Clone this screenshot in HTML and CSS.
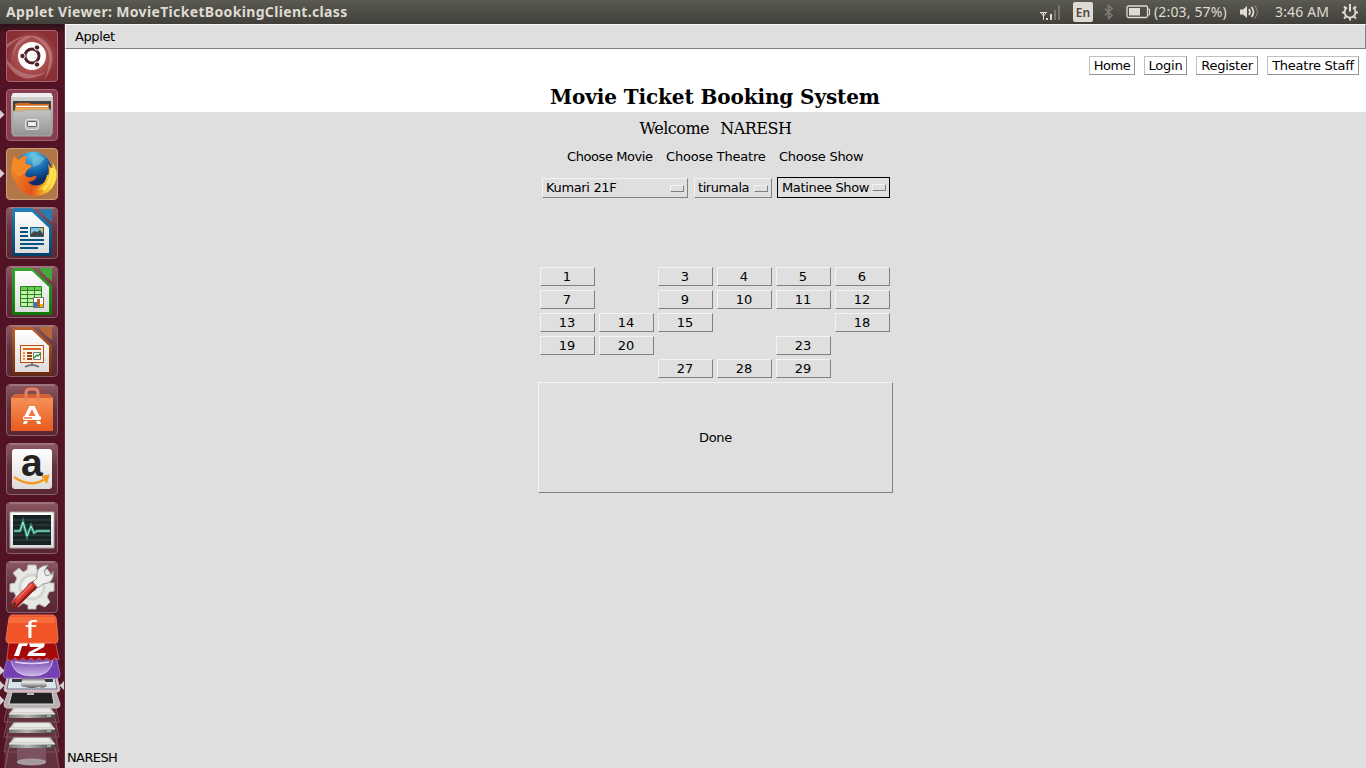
FILE: index.html
```
<!DOCTYPE html>
<html lang="en">
<head>
<meta charset="utf-8">
<title>Applet Viewer: MovieTicketBookingClient.class</title>
<link rel="stylesheet" href="styles.css">
</head>
<body>
<header class="panel">
  <span class="panel-title">Applet Viewer: MovieTicketBookingClient.class</span>
  <div class="tray">
    <svg class="signal" width="22" height="20" viewBox="0 0 22 20"><path d="M0 8.500h7M1 9l2.500 3L6 9M3.500 8v8" stroke="#dfdbd2" fill="none"/><path d="M6 14h2v2H6zM10 10h2v6h-2z" fill="#dfdbd2"/><path d="M14 6h2v10h-2zM18 1h2v15h-2z" fill="#77746b"/></svg>
    <span class="lang">En</span>
    <svg class="bt" width="10" height="16" viewBox="0 0 10 16"><path d="M1 4.500l7 7-3.500 3V1.500l3.500 3-7 7" stroke="#817e76" stroke-width="1.500" fill="none"/></svg>
    <svg class="battery" width="25" height="14" viewBox="0 0 25 14"><rect x="1" y="1" width="20.500" height="11.500" rx="1.500" fill="none" stroke="#dfdbd2" stroke-width="1.300"/><path d="M3 3h11v7.500H3z" fill="#dfdbd2"/><path d="M22 4h1.500v6H22" fill="none" stroke="#dfdbd2"/></svg>
    <span class="charge">(2:03, 57%)</span>
    <svg class="sound" width="21" height="16" viewBox="0 0 21 16"><path d="M1 5.500h3l4-3.500v12l-4-3.500H1z" fill="#dfdbd2"/><path d="M10 5q2 3 0 6M12.500 3q4 5 0 10" stroke="#dfdbd2" stroke-width="1.800" fill="none"/><path d="M15.500 1.500q6 6.500 0 13" stroke="#817e76" stroke-width="1.300" fill="none"/></svg>
    <span class="clock">3:46 AM</span>
    <svg class="gear" width="18" height="18" viewBox="0 0 18 18"><path d="M6 4.500a5.500 5.500 0 1 0 6 0" fill="none" stroke="#dfdbd2" stroke-width="1.900"/><path d="M1 9.500h3M14 9.500h3M9 14.500v3M3 3.500l2 2M15 3.500l-2 2M3 15.500l2-2M15 15.500l-2-2M9 1v7.500" stroke="#dfdbd2" stroke-width="2"/></svg>
  </div>
</header>
<div class="desktop">
<nav class="launcher">
  <svg class="defs" width="0" height="0"><defs>
    <linearGradient id="tile" x2="0" y2="1"><stop stop-color="#8c5963"/><stop offset=".48" stop-color="#63313d"/><stop offset="1" stop-color="#5b2634"/></linearGradient>
    <linearGradient id="paper" x2="0" y2="1"><stop stop-color="#fff"/><stop offset="1" stop-color="#dcdcdc"/></linearGradient>
    <linearGradient id="steel" x2="0" y2="1"><stop stop-color="#d8d8d6"/><stop offset="1" stop-color="#8b8b88"/></linearGradient>
    <linearGradient id="front" x2="0" y2="1"><stop stop-color="#c4c4c2"/><stop offset="1" stop-color="#929290"/></linearGradient>
    <linearGradient id="metal" x2="0" y2="1"><stop stop-color="#666"/><stop offset=".4" stop-color="#eee"/><stop offset="1" stop-color="#555"/></linearGradient>
    <linearGradient id="edge"><stop stop-color="#777975"/><stop offset=".4" stop-color="#b5b7b3"/><stop offset="1" stop-color="#444643"/></linearGradient>
    <linearGradient id="lens" x2="0" y2="1"><stop stop-color="#6d3da9"/><stop offset="1" stop-color="#cbb7e9"/></linearGradient>
    <radialGradient id="dash"><stop stop-color="#c08a89"/><stop offset=".6" stop-color="#a9504f"/><stop offset="1" stop-color="#8a3039"/></radialGradient>
    <radialGradient id="globe" cx=".5" cy=".1" r=".7"><stop stop-color="#64cbe9"/><stop offset=".6" stop-color="#1768ac"/><stop offset="1" stop-color="#0c2d68"/></radialGradient>
    <linearGradient id="fox" x1="0" x2="1" y2=".2"><stop stop-color="#f18a2b"/><stop offset=".6" stop-color="#e0551b"/><stop offset=".85" stop-color="#f3a225"/><stop offset="1" stop-color="#ffe146"/></linearGradient>
    <linearGradient id="bag" x2="0" y2="1"><stop stop-color="#f69860"/><stop offset="1" stop-color="#e95a1d"/></linearGradient>
    <linearGradient id="blue" x2="0" y2="1"><stop stop-color="#2382b7"/><stop offset="1" stop-color="#053f69"/></linearGradient>
    <linearGradient id="green" x2="0" y2="1"><stop stop-color="#39a52d"/><stop offset="1" stop-color="#137608"/></linearGradient>
    <linearGradient id="brown" x2="0" y2="1"><stop stop-color="#ba622f"/><stop offset="1" stop-color="#6b2b08"/></linearGradient>
    <g id="base"><rect x=".5" y=".5" width="51" height="51" rx="3.500" fill="url(#tile)" stroke="#87606a"/><path d="M4 1h44" stroke="#b38e96"/></g>
    <g id="drive"><path d="M8 -4L4 15h55L55 -4" fill="none" stroke="#7f4f5a"/><path d="M14 0h36l5 7H9z" fill="#d2d2d0"/><path d="M16 1h32l3 4H13z" fill="#e8e8e6"/><path d="M9 7h46v3q0 1-1 1H10q-1 0-1-1z" fill="url(#edge)"/><path d="M9 7h46" stroke="#f1f1f1"/><path d="M47 9h4" stroke="#d0ffcf"/></g>
  </defs></svg>

  <svg class="tile" viewBox="0 0 52 52"><rect x=".5" y=".5" width="51" height="51" rx="3.500" fill="url(#dash)" stroke="#a8666b"/><path d="M1 18Q22-3 38 15Q48 26 38 51Q56 24 36 9Q22 0 1 14zM7 38Q4 12 30 6Q3 4 7 38zM1 30Q18 51 40 42Q16 58 1 34z" fill="#d5a3a3" opacity=".45"/><circle cx="26" cy="26" r="14" fill="#fff"/><circle cx="26" cy="26" r="7" fill="none" stroke="#512027" stroke-width="3"/><g fill="#512027" stroke="#fff"><circle cx="16.500" cy="26" r="2.700"/><circle cx="31" cy="17.500" r="2.700"/><circle cx="31" cy="34.500" r="2.700"/></g></svg>

  <svg class="tile" viewBox="0 0 52 52"><rect x=".5" y=".5" width="51" height="51" rx="3.500" fill="#893e4d" stroke="#aa6370"/><path d="M7 4h38l2 5v36H5V9z" fill="url(#steel)"/><path d="M7 4h38l2 4H5z" fill="#eee"/><path d="M7 12h38v11H7z" fill="#444"/><path d="M9 15l3-1h11l2 1h18v8H9z" fill="#d56d20"/><path d="M10 17.500h32" stroke="#fff" stroke-width="1.500"/><path d="M9 19h34v4H9z" fill="#f2aa4b"/><path d="M7 22h11l2-1h25v26H7z" fill="url(#front)" stroke="#aaa"/><rect x="19.500" y="30.500" width="13" height="10" rx="2" fill="#b9b9b7" stroke="#e5e5e5"/><rect x="21.500" y="32.500" width="9" height="5" rx="1" fill="#eee" stroke="#555"/></svg>

  <svg class="tile" viewBox="0 0 52 52"><rect x=".5" y=".5" width="51" height="51" rx="3.500" fill="#b27748" stroke="#cfa078"/><circle cx="27" cy="22" r="18.500" fill="url(#globe)"/><path d="M26 12l5-5 8 3-5 6-7 3z" fill="#8bd2e4" opacity=".5"/><path d="M6 16L8 8l4 4q4-4 9-4-3 4-1 8l6 2-5 4-2 5q3 4 9 1 3-1 2 2-3 4-8 4 6 6 14 2 9-6 6-20l4 5q2-6-1-9 9 12 4 23-5 12-19 13-15 0-21-15Q3 24 6 16z" fill="url(#fox)"/><path d="M6 16L8 8l4 4q4-4 9-4-3 4-1 8l6 2-5 4q-3 5-8 7-6-4-7-13z" fill="#f78828"/><path d="M37 42q8-7 9-22" fill="none" stroke="#ffe45b" stroke-width="3"/><path d="M42 27q-2 10-9 15" fill="none" stroke="#f5bd25" stroke-width="2"/></svg>

  <svg class="tile" viewBox="0 0 52 52"><use href="#base"/><path d="M6 4q0-3 3-3h17l20 18v27q0 3-3 3H9q-3 0-3-3z" fill="url(#blue)"/><path d="M9 5h17l17 16v25H9z" fill="url(#paper)"/><path d="M33 2h13v13q-8-5-13-13z" fill="#287baf"/><path d="M14 21h8M14 25h8M14 29h8M14 33h24M14 37h24M14 41h18" stroke="#075582" stroke-width="2"/><path d="M24.500 20.500h13v9h-13z" fill="#80c4e5" stroke="#275c79"/><path d="M25 29v-2l3-3 3 1 3-2 3 4v2z" fill="#404842"/><path d="M34 21h3v3h-2z" fill="#ecbd38"/></svg>

  <svg class="tile" viewBox="0 0 52 52"><use href="#base"/><path d="M6 4q0-2 3-2h17l20 18v27q0 2-3 2H9q-3 0-3-2z" fill="url(#green)"/><path d="M9 5h17l17 16v25H9z" fill="url(#paper)"/><path d="M33 2h13v13q-8-5-13-13z" fill="#46a83c"/><path d="M14.500 20.500h21v20h-21z" fill="#c6f0ae" stroke="#228619"/><path d="M15 21h20v3H15z" fill="#6fc85a"/><path d="M14 24.500h22M14 28.500h22M14 32.500h22M14 36.500h22M21.500 20v21M28.500 20v21" stroke="#228619"/><path d="M27.500 31.500h10v10h-10z" fill="#fff" stroke="#68736b"/><path d="M28 36h3v5h-3z" fill="#2682bd"/><path d="M31 33h3v8h-3z" fill="#d65719"/><path d="M34 38h3v3h-3z" fill="#efb800"/></svg>

  <svg class="tile" viewBox="0 0 52 52"><use href="#base"/><path d="M6 4q0-2 3-2h17l20 18v27q0 3-3 3H9q-3 0-3-3z" fill="url(#brown)"/><path d="M9 5h17l17 16v26H9z" fill="url(#paper)"/><path d="M33 2h13v13q-8-5-13-13z" fill="#b5673a"/><rect x="14.500" y="20.500" width="23" height="17" fill="#fff3e6" stroke="#b94e16"/><path d="M17 24h18" stroke="#d36a2d" stroke-width="2"/><path d="M17 28h2M17 31h2M17 34h2" stroke="#e09060" stroke-width="2"/><path d="M21 28h5M21 31h5M21 34h5" stroke="#9b4519" stroke-width="2"/><path d="M27.500 27.500h7v7h-7z" fill="#fff" stroke="#777"/><path d="M28 33l3-3 1 1 3-3" stroke="#32972b" stroke-width="1.500" fill="none"/><path d="M26 38v3M19 42q7-4 14 0" stroke="#777" stroke-width="2" fill="none"/></svg>

  <svg class="tile" viewBox="0 0 52 52"><use href="#base"/><path d="M5 14l4-4h34l4 4v33H5z" fill="url(#bag)"/><path d="M5 14l4-4h34l4 4z" fill="#d46035"/><path d="M20 17V9q0-4 4-4h4q4 0 4 4v8" fill="none" stroke="#eb805f" stroke-width="3"/><path d="M23.500 22h5l5 10h-4l-3.500-7-3.500 7h-4zM18 37h4l-1.500 3H17zM30 37h4l1 3h-3.500z" fill="#fff"/><rect x="17" y="32" width="18" height="4" rx="1.500" fill="#fff"/><path d="M18 34h8" stroke="#ee763c" stroke-width="1.500"/></svg>

  <svg class="tile" viewBox="0 0 52 52"><use href="#base"/><rect x="6" y="6" width="40" height="40" rx="3" fill="url(#paper)"/><text x="15" y="33" class="amazon">a</text><path d="M8 34q17 12 33 1M36 34l6-1-2 7" fill="none" stroke="#f69a1b" stroke-width="2.300"/></svg>

  <svg class="tile" viewBox="0 0 52 52"><use href="#base"/><path d="M4 10h44v36H4z" fill="url(#paper)" stroke="#a9a9a7"/><path d="M7 13h38v30H7z" fill="#172322"/><path d="M7 18h38M7 23h38M7 28h38M7 33h38M7 38h38" stroke="#415856" stroke-width=".7"/><path d="M8 29h6l3-9 4 14 4-10 3 7 3-2h13" fill="none" stroke="#327e70" stroke-width="3"/><path d="M8 29h6l3-9 4 14 4-10 3 7 3-2h13" fill="none" stroke="#9af8d8"/></svg>

  <svg class="tile" viewBox="0 0 52 52"><use href="#base"/><path d="M22 4h8l1 5 5 2 5-3 4 5-3 5 2 4h4v8l-5 1-2 5 3 5-5 5-6-3-3 2v3h-8v-4l-5-2-5 4-6-5 4-6-2-4H4v-8l5-1 2-5-4-5 6-5 4 4 4-2z" fill="#e7e7e5" stroke="#bbb"/><circle cx="26" cy="26" r="12" fill="#efefed" stroke="#d4d4d1" stroke-width="3"/><circle cx="26" cy="26" r="5" fill="#a7989c"/><path d="M9 43L28 24" stroke="#8b1717" stroke-width="8" stroke-linecap="round"/><path d="M8.500 42L27.500 23" stroke="#d73a31" stroke-width="5.500" stroke-linecap="round"/><path d="M11 38L26 23" stroke="#f0786c" stroke-width="1.500"/><path d="M27 21l4-4q-2-12 11-13l-4 6 2 5 6-2 1-3q2 12-10 13l-5 4z" fill="#eee" stroke="#999"/><circle cx="8.500" cy="43" r="1.700" fill="#4d2c2c"/></svg>

  <svg class="stack" width="65" height="154" viewBox="0 614 65 154">
    <path d="M8 704h48l3 64H4z" fill="#62323f"/><path d="M9 747L5 768M55 747l4 21" stroke="#8a5c67"/>
    <path d="M17 747h29v15q-14 6-29 0z" fill="#7a5260"/><ellipse cx="31.500" cy="762" rx="14.500" ry="3" fill="#a59a9d" stroke="#b9a9ae" stroke-width=".7"/>
    <use href="#drive" y="737"/><use href="#drive" y="722"/><use href="#drive" y="707"/>
    <path d="M9 689h46l5 15q0 4-3 4H7q-3 0-3-4z" fill="#b5b1b2" stroke="#d1bfc3"/><path d="M12 692h40l2 12H9z" fill="#222" stroke="#ddd"/><path d="M27 694h7" stroke="#bbb" stroke-width="2"/>
    <path d="M8 674h48l4 15q0 3-3 3H7q-3 0-3-3z" fill="#d7bfc6" stroke="#d5b1b7"/><path d="M10 674h44l3 15H7z" fill="#dbe4ef" stroke="#64758a"/><path d="M12 679h10l2 3H12zM44 679h9v3h-9z" fill="#3b3b3b"/><path d="M21 678h23l3 8q-3 3-8 1-8 2-14 0-5 0-4-4 2-2 0-5z" fill="url(#metal)"/>
    <path d="M8 656h48l4 18q0 4-3 4H6q-3 0-3-4z" fill="#7541b2" stroke="#9469bd"/><path d="M11 658h42q-1 18-21 18t-21-18z" fill="url(#lens)" stroke="#d1c1ed"/><path d="M15 662q17 3 34 0" stroke="#ddd0f3" stroke-width="1.500" fill="none"/>
    <path d="M9 640h46l4 20-4-2-4 3-4-3-4 3-4-3-4 3-4-3-4 3-4-3-4 3-4-3-4 3-4-2z" fill="#a60909" stroke="#ba585a"/><path d="M19 643h9l-1 3h-5l-3 10h-5zM29 643h16l-1 4-11 6h13l-1 3H27l2-4 10-5h-9z" fill="#fff"/>
    <path d="M12 615h40q3 0 4 3l2 21q0 4-3 4H9q-3 0-3-4l3-21q1-3 3-3z" fill="#f15427" stroke="#ec7655"/><path d="M10 617h44l1 6H9z" fill="#fa8151" opacity=".55"/><text transform="translate(25 638) scale(1.4 1)" class="font-icon">f</text>
  </svg>
  <svg class="markers" width="65" height="744" viewBox="0 24 65 744"><path d="M0 110l4.500 4.500-4.500 4.500zM0 169l4.500 4.500-4.500 4.500zM0 666l4.500 4.500-4.500 4.500zM0 681l4.500 4.500-4.500 4.500zM0 696l4.500 4.500-4.500 4.500zM64 681l-4.500 4.500 4.500 4.500z" fill="#d8cdd0"/></svg>
</nav>
<main class="window">
  <div class="menubar"><span>Applet</span></div>
  <section class="banner">
    <div class="links"><button class="home">Home</button><button class="login">Login</button><button class="register">Register</button><button class="staff">Theatre Staff</button></div>
    <h1>Movie Ticket Booking System</h1>
  </section>
  <section class="booking">
    <p class="welcome">Welcome&nbsp; NARESH</p>
    <div class="labels"><span class="l1">Choose Movie</span><span class="l2">Choose Theatre</span><span class="l3">Choose Show</span></div>
    <div class="choices"><div class="choice movie"><span>Kumari 21F</span><i></i></div><div class="choice theatre"><span>tirumala</span><i></i></div><div class="choice show"><span>Matinee Show</span><i></i></div></div>
    <div class="seats">
      <button>1</button><b></b><button>3</button><button>4</button><button>5</button><button>6</button>
      <button>7</button><b></b><button>9</button><button>10</button><button>11</button><button>12</button>
      <button>13</button><button>14</button><button>15</button><b></b><b></b><button>18</button>
      <button>19</button><button>20</button><b></b><b></b><button>23</button><b></b>
      <b></b><b></b><button>27</button><button>28</button><button>29</button><b></b>
    </div>
    <button class="done">Done</button>
  </section>
  <footer>NARESH</footer>
</main>
</div>
</body>
</html>
```
FILE: styles.css
```
* { box-sizing: border-box; }
body { margin: 0; width: 1366px; height: 768px; overflow: hidden; font: 13px/16px "DejaVu Sans", sans-serif; color: #000; background: #dfdfdf; }
button { margin: 0; padding: 0; font: inherit; color: inherit; background: #dfdfdf; border: 1px solid; border-color: #f3f3f3 #808080 #808080 #f3f3f3; border-radius: 0; white-space: nowrap; }
.panel { height: 24px; display: flex; justify-content: space-between; background: linear-gradient(#5b5a51, #403f3a); color: #dfdbd2; font-family: "Noto Sans", sans-serif; }
.panel-title { padding-left: 6px; font-size: 14px; line-height: 24px; font-weight: 700; letter-spacing: .34px; white-space: nowrap; }
.tray { width: 326px; display: flex; align-items: center; font-size: 14px; white-space: nowrap; }
.tray svg { flex: none; }
.signal { margin-top: 4px; }
.lang { margin-left: 11px; width: 20px; height: 20px; border-radius: 2px; background: #dfdbd2; color: #4a4943; font-size: 12px; font-weight: 600; line-height: 21px; text-align: center; }
.bt { margin-left: 11px; }
.battery { margin-left: 12px; }
.charge { margin-left: 3px; width: 74px; letter-spacing: .15px; }
.sound { margin-left: 11px; }
.clock { margin-left: 15px; width: 55px; letter-spacing: .15px; }
.gear { margin-left: 11px; }
.desktop { display: flex; height: 744px; }
.launcher { position: relative; width: 65px; padding: 6px 0 0 6px; display: flex; flex-direction: column; gap: 7px; background: linear-gradient(#2d1018, #521424 10px, #521424); border-right: 1px solid #653047; }
.defs { position: absolute; }
.tile { display: block; width: 52px; height: 52px; flex: none; overflow: visible; }
.stack { display: block; flex: none; margin: -6px 0 0 -6px; }
.markers { position: absolute; left: 0; top: 0; }
.amazon { font: bold 39px "Liberation Sans", sans-serif; fill: #222; }
.font-icon { font: 23px "DejaVu Sans", sans-serif; fill: #fff; }
.window { flex: 1; display: flex; flex-direction: column; }
.menubar { height: 25px; padding: 4px 0 0 9px; border: 1px solid; border-color: #f7f7f7 #808080 #808080 #f7f7f7; letter-spacing: -.4px; }
.banner { height: 63px; background: #fff; padding: 7px 7px 0 0; }
.links { display: flex; justify-content: flex-end; gap: 9px; }
.links button { height: 19px; background: #fff; border-color: #c0c0c0 #909090 #909090 #c0c0c0; letter-spacing: -.25px; }
.links .home { width: 46px; letter-spacing: -.5px; }
.login { width: 43px; }
.register { width: 62px; }
.staff { width: 92px; }
h1 { margin: 10px 0 0 485px; font: bold 20px/24px "DejaVu Serif", serif; letter-spacing: -.11px; white-space: nowrap; }
.booking { flex: 1; width: 355px; margin-left: 473px; }
.welcome { margin: 7px 0 0; text-align: center; font: 16px/20px "DejaVu Serif", serif; letter-spacing: -.5px; word-spacing: 1px; }
.labels { display: flex; padding: 10px 0 0 29px; white-space: nowrap; }
.l1 { width: 99px; letter-spacing: -.42px; }
.l2 { width: 113px; letter-spacing: -.2px; }
.l3 { letter-spacing: -.25px; }
.choices { display: flex; align-items: flex-end; height: 33px; padding-left: 4px; }
.choice { height: 20px; display: flex; align-items: center; justify-content: space-between; padding: 0 3px; border: 1px solid; border-color: #f3f3f3 #808080 #808080 #f3f3f3; letter-spacing: -.42px; white-space: nowrap; }
.choice i { flex: none; width: 14px; height: 7px; border: 1px solid; border-color: #f3f3f3 #808080 #808080 #f3f3f3; }
.movie { width: 146px; letter-spacing: -.35px; }
.theatre { width: 78px; margin-left: 6px; }
.show { width: 113px; height: 21px; margin-left: 5px; padding: 0 3px 0 4px; border-color: #000; letter-spacing: -.35px; }
.seats { display: grid; grid-template-columns: repeat(6, 55px); grid-auto-rows: 19px; gap: 4px; padding: 69px 0 0 2px; }
.seats button { line-height: 16px; padding-right: 1px; }
.done { display: block; width: 355px; height: 111px; margin-top: 4px; letter-spacing: -.3px; }
footer { height: 18px; padding-left: 2px; line-height: 16px; letter-spacing: -.6px; }
```
